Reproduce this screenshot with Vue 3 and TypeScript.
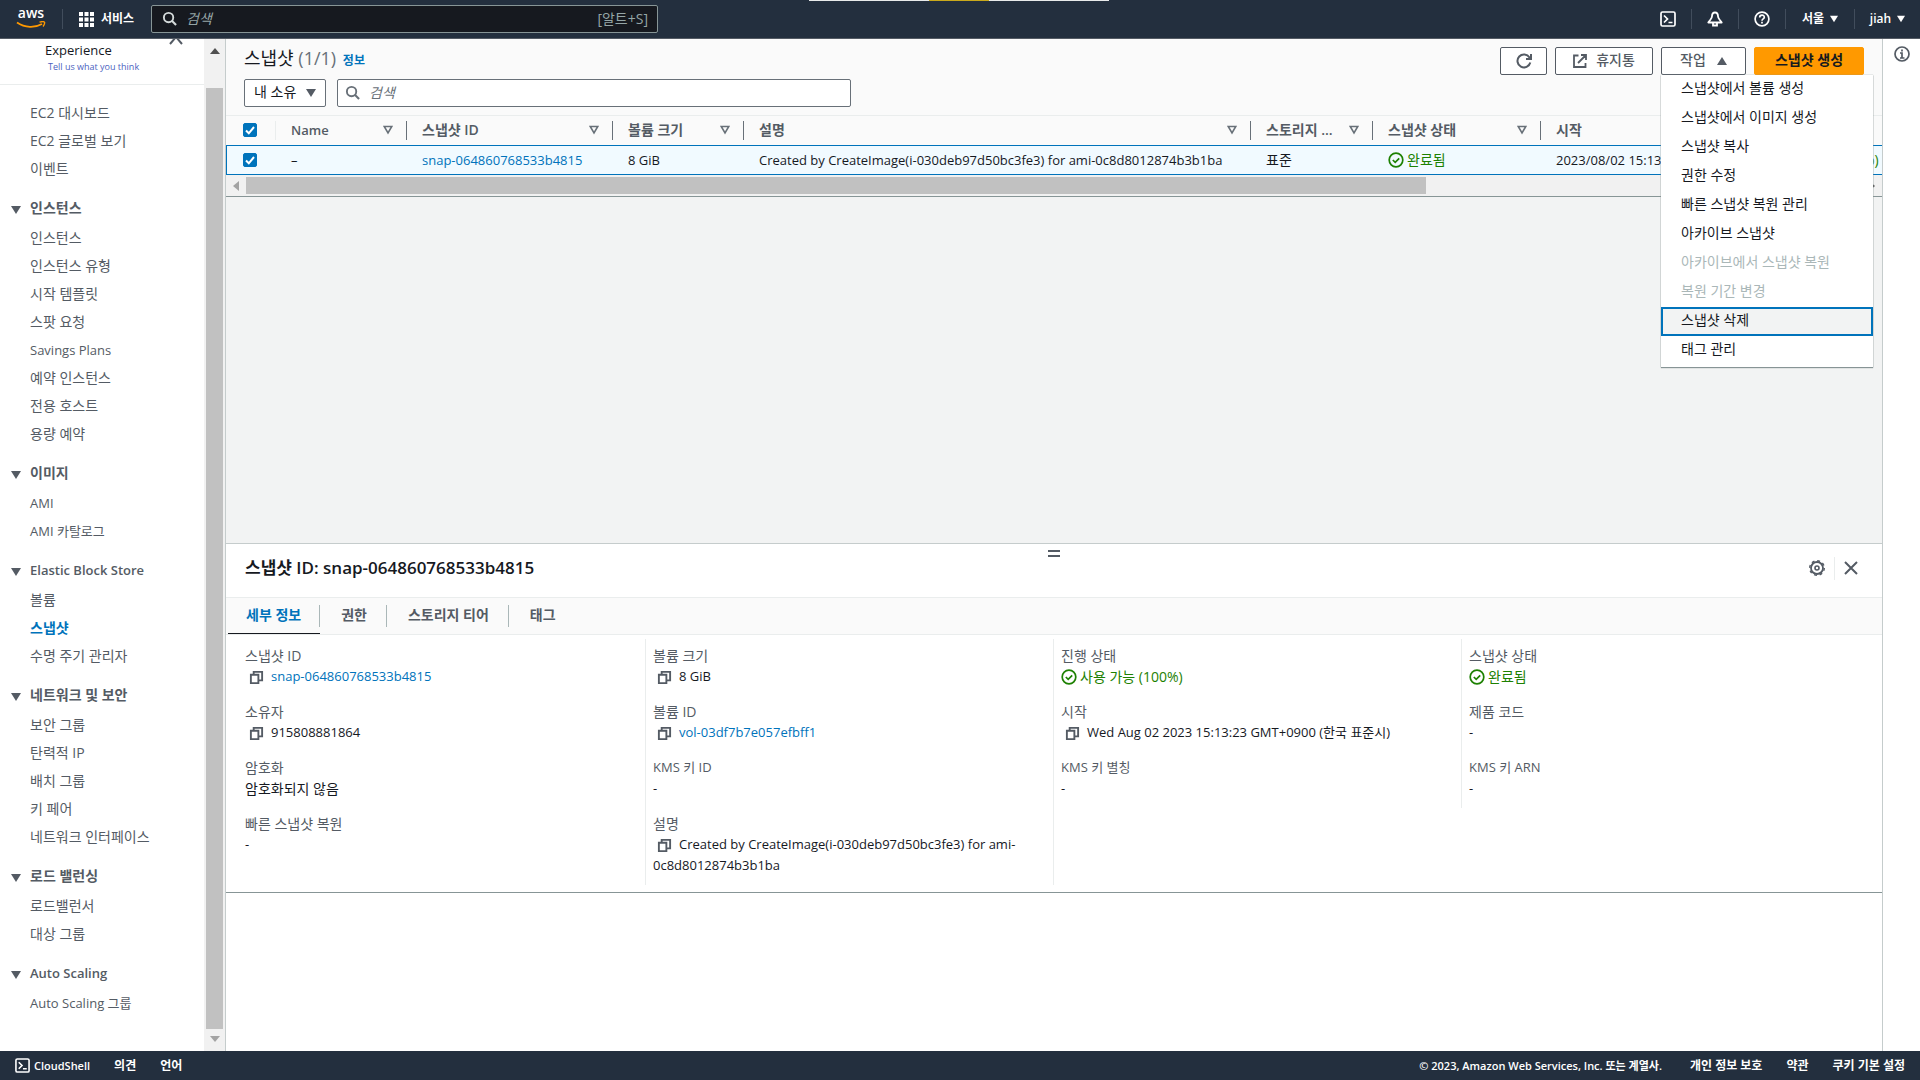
<script setup lang="ts">
import { ref } from 'vue'

interface NavGroup {
  title: string
  items: string[]
}

interface Field {
  label: string
  value: string
  kind?: 'copy' | 'link' | 'status'
}

const topLinks: string[] = ['EC2 대시보드', 'EC2 글로벌 보기', '이벤트']

const groups: NavGroup[] = [
  {
    title: '인스턴스',
    items: ['인스턴스', '인스턴스 유형', '시작 템플릿', '스팟 요청', 'Savings Plans', '예약 인스턴스', '전용 호스트', '용량 예약'],
  },
  { title: '이미지', items: ['AMI', 'AMI 카탈로그'] },
  { title: 'Elastic Block Store', items: ['볼륨', '스냅샷', '수명 주기 관리자'] },
  { title: '네트워크 및 보안', items: ['보안 그룹', '탄력적 IP', '배치 그룹', '키 페어', '네트워크 인터페이스'] },
  { title: '로드 밸런싱', items: ['로드밸런서', '대상 그룹'] },
  { title: 'Auto Scaling', items: ['Auto Scaling 그룹'] },
]

const columns = ['Name', '스냅샷 ID', '볼륨 크기', '설명', '스토리지 ...', '스냅샷 상태', '시작', '진행 상태']

const actions = [
  { label: '스냅샷에서 볼륨 생성' },
  { label: '스냅샷에서 이미지 생성' },
  { label: '스냅샷 복사' },
  { label: '권한 수정' },
  { label: '빠른 스냅샷 복원 관리' },
  { label: '아카이브 스냅샷' },
  { label: '아카이브에서 스냅샷 복원', disabled: true },
  { label: '복원 기간 변경', disabled: true },
  { label: '스냅샷 삭제', focused: true },
  { label: '태그 관리' },
]

const tabs = ['세부 정보', '권한', '스토리지 티어', '태그']

const details: Field[][] = [
  [
    { label: '스냅샷 ID', value: 'snap-064860768533b4815', kind: 'link' },
    { label: '소유자', value: '915808881864', kind: 'copy' },
    { label: '암호화', value: '암호화되지 않음' },
    { label: '빠른 스냅샷 복원', value: '-' },
  ],
  [
    { label: '볼륨 크기', value: '8 GiB', kind: 'copy' },
    { label: '볼륨 ID', value: 'vol-03df7b7e057efbff1', kind: 'link' },
    { label: 'KMS 키 ID', value: '-' },
    { label: '설명', value: 'Created by CreateImage(i-030deb97d50bc3fe3) for ami-0c8d8012874b3b1ba', kind: 'copy' },
  ],
  [
    { label: '진행 상태', value: '사용 가능 (100%)', kind: 'status' },
    { label: '시작', value: 'Wed Aug 02 2023 15:13:23 GMT+0900 (한국 표준시)', kind: 'copy' },
    { label: 'KMS 키 별칭', value: '-' },
  ],
  [
    { label: '스냅샷 상태', value: '완료됨', kind: 'status' },
    { label: '제품 코드', value: '-' },
    { label: 'KMS 키 ARN', value: '-' },
  ],
]

const allChecked = ref(true)
const rowChecked = ref(true)
const activeTab = ref('세부 정보')

// Hangul glyphs sit smaller in their box than Latin ones, so they get a larger size.
const script = (text: string): string => (/^[가-힣]/.test(text) ? 'ko' : 'la')
</script>

<template>
  <div class="app">
    <svg class="defs" aria-hidden="true">
      <symbol id="i-search" viewBox="0 0 16 16">
        <circle cx="7" cy="7" r="5" fill="none" stroke="currentColor" stroke-width="2" />
        <path d="M10.500 10.500l4.500 4.500" fill="none" stroke="currentColor" stroke-width="2.200" />
      </symbol>
      <symbol id="i-copy" viewBox="0 0 16 16">
        <path d="M2 5h8v9H2zM5 5V2h9v9h-4" fill="none" stroke="currentColor" stroke-width="2" />
      </symbol>
      <symbol id="i-check" viewBox="0 0 16 16">
        <circle cx="8" cy="8" r="6.8" fill="none" stroke="currentColor" stroke-width="1.7" />
        <path d="M4.8 8l2.4 2.4 4-4" fill="none" stroke="currentColor" stroke-width="1.7" />
      </symbol>
      <symbol id="i-filter" viewBox="0 0 10 10">
        <path d="M1.2 1.5h7.6L5 8z" fill="none" stroke="currentColor" stroke-width="1.6" />
      </symbol>
      <symbol id="i-down" viewBox="0 0 10 10">
        <path d="M0 1h10L5 9z" fill="currentColor" />
      </symbol>
      <symbol id="i-shell" viewBox="0 0 16 16">
        <rect x="1" y="1" width="14" height="14" rx="1.5" fill="none" stroke="currentColor" stroke-width="1.7" />
        <path d="M4 4.5L7.5 8 4 11.5M8.5 11.5h4" fill="none" stroke="currentColor" stroke-width="1.7" />
      </symbol>
    </svg>

    <header class="top">
      <span class="strip"><i></i></span>
      <a href="#" class="logo" aria-label="AWS">
        <span>aws</span>
        <svg width="30" height="8" viewBox="0 0 30 8" fill="none" stroke="#f90">
          <path d="M1 1.500c8 5.500 18 5.500 25 1.500" stroke-width="1.800" />
          <path d="M23.500 1.200c2-.6 4-.8 4.800-.2s0 3-1.300 4.500" stroke-width="1.400" />
        </svg>
      </a>
      <button type="button" class="services">
        <svg width="15" height="15" viewBox="0 0 15 15" fill="#fff">
          <path d="M0 0h4v4H0zM5.500 0h4v4h-4zM11 0h4v4h-4zM0 5.500h4v4H0zM5.500 5.500h4v4h-4zM11 5.500h4v4h-4zM0 11h4v4H0zM5.500 11h4v4h-4zM11 11h4v4h-4z" />
        </svg>
        서비스
      </button>
      <label class="gsearch">
        <svg width="15" height="15"><use href="#i-search" /></svg>
        <input type="text" placeholder="검색" aria-label="전체 검색" />
        <span>[알트+S]</span>
      </label>
      <nav class="tools">
        <button type="button" aria-label="CloudShell"><svg width="16" height="16"><use href="#i-shell" /></svg></button>
        <button type="button" aria-label="알림">
          <svg width="16" height="16" viewBox="0 0 16 16" fill="none" stroke="currentColor" stroke-width="1.8">
            <path d="M8 1.500c-2.300 0-3 1.800-3 3.800 0 2.700-2.200 3.700-3.700 6.200h13.400c-1.500-2.500-3.700-3.500-3.700-6.200 0-2-.7-3.800-3-3.800z" stroke-linejoin="round" />
            <path d="M6 12v2.500h4V12" />
          </svg>
        </button>
        <button type="button" aria-label="도움말">
          <svg width="16" height="16" viewBox="0 0 16 16" fill="none" stroke="currentColor" stroke-width="1.700">
            <circle cx="8" cy="8" r="6.900" />
            <path d="M5.700 6.500c0-3 4.600-3 4.600-.3C10.300 8 8 7.800 8 9.700M8 10.800v1.700" />
          </svg>
        </button>
        <button type="button" class="txt">서울 <svg width="8" height="8"><use href="#i-down" /></svg></button>
        <button type="button" class="txt user">jiah <svg width="8" height="8"><use href="#i-down" /></svg></button>
      </nav>
    </header>

    <div class="body">
      <div class="side">
        <nav class="nav">
          <div class="promo">
            <span>Experience</span>
            <a href="#">Tell us what you think</a>
            <svg width="14" height="12" viewBox="0 0 14 12"><path d="M1 11l6-7 6 7" fill="none" stroke="#545b64" stroke-width="2" /></svg>
          </div>
          <ul class="first">
            <li v-for="t in topLinks" :key="t"><a href="#" class="ko">{{ t }}</a></li>
          </ul>
          <section v-for="g in groups" :key="g.title">
            <h3 :class="script(g.title)">
              <svg width="10" height="10"><use href="#i-down" /></svg>{{ g.title }}
            </h3>
            <ul>
              <li v-for="t in g.items" :key="t">
                <a href="#" :class="[script(t), { on: t === '스냅샷' }]">{{ t }}</a>
              </li>
            </ul>
          </section>
        </nav>
        <div class="vbar">
          <svg width="10" height="6" viewBox="0 0 10 6"><path d="M0 6l5-6 5 6z" fill="#505050" /></svg>
          <i></i>
          <svg width="10" height="6" viewBox="0 0 10 6"><path d="M0 0l5 6 5-6z" fill="#a3a3a3" /></svg>
        </div>
      </div>

      <main>
        <section class="list">
          <div class="head">
            <h1>스냅샷 <span>(1/1)</span> <a href="#">정보</a></h1>
            <div class="btns">
              <button type="button" class="btn refresh" aria-label="새로 고침">
                <svg width="16" height="16" viewBox="0 0 16 16" fill="none" stroke="currentColor" stroke-width="2">
                  <path d="M14.300 9.500A6.500 6.500 0 1 1 13.500 4.500L15 6" />
                  <path d="M15 1v5h-5" />
                </svg>
              </button>
              <button type="button" class="btn bin">
                <svg width="14" height="14" viewBox="0 0 14 14" fill="none" stroke="currentColor" stroke-width="1.800">
                  <path d="M5.500 1.500H1v11.500h11.500V9M8 1h5v5M13 1L5 9" />
                </svg>
                <span>휴지통</span>
              </button>
              <div class="drop">
                <button type="button" class="btn act" aria-expanded="true">
                  <span>작업</span>
                  <svg width="10" height="10" viewBox="0 0 10 10"><path d="M0 9L5 1l5 8z" fill="currentColor" /></svg>
                </button>
                <ul class="menu">
                  <li v-for="a in actions" :key="a.label">
                    <button type="button" :disabled="a.disabled" :class="{ focused: a.focused }">{{ a.label }}</button>
                  </li>
                </ul>
              </div>
              <button type="button" class="btn primary"><span>스냅샷 생성</span></button>
            </div>
          </div>
          <div class="filters">
            <div class="owner">
              <select aria-label="소유권">
                <option>내 소유</option>
              </select>
              <svg width="10" height="10"><use href="#i-down" /></svg>
            </div>
            <label class="search">
              <svg width="15" height="15"><use href="#i-search" /></svg>
              <input type="text" placeholder="검색" aria-label="스냅샷 검색" />
            </label>
          </div>

          <div class="scroll">
            <table>
              <colgroup>
                <col class="c0" /><col class="c1" /><col class="c2" /><col class="c3" /><col class="c4" /><col class="c5" /><col class="c6" /><col class="c7" /><col class="c8" />
              </colgroup>
              <thead>
                <tr>
                  <th class="pick"><div><input v-model="allChecked" type="checkbox" aria-label="모두 선택" /></div></th>
                  <th v-for="c in columns" :key="c">
                    <div :class="script(c)">
                      <span>{{ c }}</span>
                      <svg width="10" height="10"><use href="#i-filter" /></svg>
                    </div>
                  </th>
                </tr>
              </thead>
              <tbody>
                <tr>
                  <td class="pick"><input v-model="rowChecked" type="checkbox" aria-label="스냅샷 선택" /></td>
                  <td>–</td>
                  <td><a href="#">snap-064860768533b4815</a></td>
                  <td>8 GiB</td>
                  <td>Created by CreateImage(i-030deb97d50bc3fe3) for ami-0c8d8012874b3b1ba</td>
                  <td class="ko">표준</td>
                  <td class="ko"><span class="ok"><svg width="16" height="16"><use href="#i-check" /></svg>완료됨</span></td>
                  <td>2023/08/02 15:13 GMT+9</td>
                  <td class="ko"><span class="ok"><svg width="16" height="16"><use href="#i-check" /></svg>사용 가능 (100%)</span></td>
                </tr>
              </tbody>
            </table>
          </div>
          <div class="hbar">
            <svg width="6" height="10" viewBox="0 0 6 10"><path d="M6 0L0 5l6 5z" fill="#a3a3a3" /></svg>
            <div><i></i></div>
            <svg width="6" height="10" viewBox="0 0 6 10"><path d="M0 0l6 5-6 5z" fill="#505050" /></svg>
          </div>
        </section>

        <section class="panel">
          <div class="grip"><svg width="12" height="8" viewBox="0 0 12 8"><path d="M0 1h12M0 6h12" stroke="#545b64" stroke-width="2" /></svg></div>
          <div class="phead">
            <h2>스냅샷 ID: snap-064860768533b4815</h2>
            <button type="button" aria-label="기본 설정">
              <svg width="16" height="16" viewBox="0 0 16 16" fill="none" stroke="currentColor">
                <circle cx="8" cy="8" r="6" stroke-width="1.800" />
                <circle cx="8" cy="8" r="7.300" stroke-width="1.400" stroke-dasharray="2.900 2.830" />
                <circle cx="8" cy="8" r="2" stroke-width="1.600" />
              </svg>
            </button>
            <button type="button" class="close" aria-label="닫기">
              <svg width="14" height="14" viewBox="0 0 14 14"><path d="M1 1l12 12M13 1L1 13" stroke="currentColor" stroke-width="2" /></svg>
            </button>
          </div>
          <div class="tabs" role="tablist">
            <button v-for="t in tabs" :key="t" type="button" role="tab" :class="{ on: t === activeTab }" @click="activeTab = t">
              <span>{{ t }}</span>
            </button>
          </div>
          <div class="grid">
            <dl v-for="(col, i) in details" :key="i">
              <template v-for="f in col" :key="f.label">
                <dt :class="script(f.label)">{{ f.label }}</dt>
                <dd :class="[script(f.value), f.kind]">
                  <svg v-if="f.kind === 'status'" width="16" height="16"><use href="#i-check" /></svg>
                  <button v-else-if="f.kind" type="button" :aria-label="f.label + ' 복사'"><svg width="15" height="15"><use href="#i-copy" /></svg></button>
                  <a v-if="f.kind === 'link'" href="#">{{ f.value }}</a>
                  <template v-else>{{ f.value }}</template>
                </dd>
              </template>
            </dl>
          </div>
        </section>
      </main>

      <aside class="rail">
        <button type="button" aria-label="정보">
          <svg width="16" height="16" viewBox="0 0 16 16" fill="none" stroke="currentColor" stroke-width="1.700">
            <circle cx="8" cy="8" r="7" />
            <path d="M6 7h2v5M6 12h4.500M8 3.500v2" />
          </svg>
        </button>
      </aside>
    </div>

    <footer>
      <a href="#" class="cs"><svg width="15" height="15"><use href="#i-shell" /></svg>CloudShell</a>
      <a href="#">의견</a>
      <a href="#">언어</a>
      <span class="copyr">© 2023, Amazon Web Services, Inc. 또는 계열사.</span>
      <a href="#">개인 정보 보호</a>
      <a href="#">약관</a>
      <a href="#">쿠키 기본 설정</a>
    </footer>
  </div>
</template>

<style>
body {
  margin: 0;
  background: #fff;
}
</style>

<style scoped>
.app {
  display: flex;
  flex-direction: column;
  height: 100vh;
  overflow: hidden;
  font: 13px/20px "Open Sans", "Noto Sans", "Noto Sans CJK KR", sans-serif;
  color: #16191f;
}
.app * {
  box-sizing: border-box;
}
.defs {
  position: absolute;
  width: 0;
  height: 0;
}
svg {
  flex: none;
}
a {
  color: #0073bb;
  text-decoration: none;
}
button,
input,
select {
  font: inherit;
  color: inherit;
  margin: 0;
}
button {
  background: none;
  border: 0;
  padding: 0;
}
ul {
  list-style: none;
  margin: 0;
  padding: 0;
}
input::placeholder {
  font-style: italic;
  color: #687078;
  opacity: 1;
}
.ko {
  font-size: 14px;
}
.la {
  font-size: 13px;
}

/* top bar */
.top {
  position: relative;
  display: flex;
  align-items: center;
  flex: none;
  height: 39px;
  padding-left: 16px;
  background: #232f3e;
  border-bottom: 1px solid #545b64;
  color: #fff;
  font-size: 12px;
  font-weight: 600;
}
.strip {
  position: absolute;
  top: 0;
  left: 50%;
  width: 300px;
  height: 1px;
  margin-left: -151px;
  background: #e8eaea;
}
.strip i {
  display: block;
  width: 60px;
  height: 1px;
  margin: 0 auto;
  background: #c9a91c;
}
.logo {
  display: flex;
  flex-direction: column;
  align-items: center;
  justify-content: flex-end;
  height: 20px;
  padding-right: 16px;
  border-right: 1px solid #414d5c;
  color: #fff;
  font-size: 14px;
  line-height: 16px;
}
.services {
  display: flex;
  align-items: center;
  gap: 7px;
  width: 88px;
  padding-left: 16px;
}
.gsearch {
  display: flex;
  align-items: center;
  width: 507px;
  height: 28px;
  padding: 0 9px 1px 10px;
  background: #16191f;
  border: 1px solid #879596;
  border-radius: 2px;
  font-size: 14px;
  font-weight: 400;
  color: #95a5a6;
}
.gsearch svg {
  color: #d5dbdb;
}
.gsearch input,
.search input {
  flex: 1;
  min-width: 0;
  padding: 0 9px;
  border: 0;
  outline: 0;
  background: none;
}
.gsearch input::placeholder {
  color: #95a5a6;
}
.tools {
  display: flex;
  margin-left: auto;
}
.tools button {
  display: flex;
  align-items: center;
  justify-content: center;
  width: 47px;
  height: 20px;
  border-right: 1px solid #414d5c;
}
.tools .txt {
  gap: 6px;
  width: 69px;
}
.tools .user {
  width: 65px;
  border: 0;
}

/* side navigation */
.body {
  display: flex;
  flex: 1;
  min-height: 0;
}
.side {
  display: flex;
  flex: none;
  width: 226px;
  border-right: 1px solid #c5cccc;
}
.nav {
  flex: 1;
  overflow: hidden;
}
.promo {
  position: relative;
  height: 46px;
  padding: 1px 0 0 45px;
  border-bottom: 1px solid #eaeded;
}
.promo span {
  display: block;
}
.promo a {
  display: block;
  margin-left: 3px;
  font-size: 9px;
  line-height: 14px;
  color: #4b5fc0;
}
.promo svg {
  position: absolute;
  top: -6px;
  right: 21px;
}
.first {
  padding-top: 14px;
}
.nav li {
  height: 28px;
  padding-left: 30px;
  line-height: 28px;
}
.nav li a {
  color: #545b64;
}
.nav li a.on {
  color: #0073bb;
  font-weight: 700;
}
h3 {
  display: flex;
  align-items: center;
  gap: 9px;
  height: 30px;
  margin: 11px 0 0;
  padding: 0 0 2px 11px;
  font-weight: 600;
  color: #545b64;
}
h3 svg {
  margin-top: 3px;
}
.vbar {
  display: flex;
  flex-direction: column;
  align-items: center;
  width: 21px;
  padding: 9px 0;
  background: #f1f1f1;
}
.vbar i {
  flex: 1;
  width: 17px;
  margin: 34px 0 7px;
  background: #c1c1c1;
}

/* snapshot list */
main {
  display: flex;
  flex-direction: column;
  flex: 1;
  min-width: 0;
}
.list {
  flex: 1;
  background: #f2f3f3;
}
.head {
  display: flex;
  justify-content: space-between;
  height: 36px;
  padding: 8px 18px 0;
  background: #fafafa;
}
h1 {
  margin: 0;
  font-size: 18px;
  line-height: 22px;
  font-weight: 400;
}
h1 span {
  color: #687078;
}
h1 a {
  margin-left: 2px;
  font-size: 12px;
  font-weight: 600;
}
.btns {
  display: flex;
  gap: 8px;
}
.btn {
  display: flex;
  align-items: center;
  justify-content: center;
  gap: 9px;
  height: 28px;
  border: 1px solid #545b64;
  border-radius: 2px;
  background: #fff;
  color: #545b64;
  font-size: 14px;
  font-weight: 500;
}
.btn span {
  padding-bottom: 3px;
}
.refresh {
  width: 47px;
}
.bin {
  width: 98px;
}
.act {
  width: 85px;
  gap: 11px;
}
.primary {
  width: 110px;
  border-color: #f90;
  background: #f90;
  color: #16191f;
  font-weight: 600;
}
.drop {
  position: relative;
}
.menu {
  position: absolute;
  z-index: 5;
  top: 28px;
  left: 0;
  width: 212px;
  padding-bottom: 2px;
  background: #fff;
  box-shadow: 0 0 1px #879596, 0 1px 1px #879596;
  font-size: 14px;
}
.menu button {
  display: block;
  width: 100%;
  height: 29px;
  padding-left: 18px;
  border: 2px solid transparent;
  text-align: left;
  line-height: 20px;
  padding-bottom: 4px;
}
.menu button:disabled {
  color: #aab7b8;
}
.menu .focused {
  background: #f2f3f3;
  border-color: #0073bb;
}
.filters {
  display: flex;
  gap: 11px;
  height: 41px;
  padding: 4px 18px 0;
  background: #fafafa;
  border-bottom: 1px solid #eaeded;
}
.owner {
  position: relative;
  width: 82px;
  height: 28px;
}
.owner select {
  appearance: none;
  width: 100%;
  height: 28px;
  padding: 0 9px 3px;
  border: 1px solid #687078;
  border-radius: 2px;
  background: #fff;
  font-size: 14px;
}
.owner svg {
  position: absolute;
  top: 9px;
  right: 10px;
  color: #545b64;
}
.search {
  display: flex;
  align-items: center;
  width: 514px;
  height: 28px;
  padding: 0 0 1px 7px;
  border: 1px solid #687078;
  border-radius: 2px;
  background: #fff;
  font-size: 14px;
}
.search svg {
  color: #687078;
}
.scroll {
  overflow: hidden;
}
table {
  width: 1760px;
  table-layout: fixed;
  border-collapse: separate;
  border-spacing: 0;
}
.c0 { width: 50px; }
.c1 { width: 131px; }
.c2 { width: 206px; }
.c3 { width: 131px; }
.c4 { width: 507px; }
.c5 { width: 122px; }
.c6 { width: 168px; }
.c7 { width: 201px; }
th,
td {
  padding: 0;
  text-align: left;
  white-space: nowrap;
}
th {
  height: 29px;
  background: #fafafa;
  font-weight: 600;
  color: #545b64;
}
th div {
  display: flex;
  align-items: center;
  justify-content: space-between;
  height: 19px;
  padding: 0 13px 2px 15px;
  border-right: 1px solid #687078;
}
th.pick div {
  padding-left: 0;
  border-color: #eaeded;
}
th svg {
  color: #687078;
}
td {
  height: 30px;
  padding-left: 15px;
  background: #f1faff;
  border: 1px solid #0073bb;
  border-width: 1px 0;
}
td.pick {
  border-left-width: 1px;
}
.pick {
  padding-left: 17px;
}
.pick input {
  appearance: none;
  display: block;
  width: 14px;
  height: 14px;
  border: 1px solid #687078;
  border-radius: 2px;
  background: #fff;
}
.pick input:checked {
  border-color: #0073bb;
  background: #0073bb url("data:image/svg+xml,%3Csvg xmlns='http://www.w3.org/2000/svg' viewBox='0 0 12 12'%3E%3Cpath d='M2 6.500l2.800 2.800L10 3' fill='none' stroke='%23fff' stroke-width='2'/%3E%3C/svg%3E");
}
td.pick {
  padding-left: 16px;
}
.ok,
dd.status {
  display: flex;
  align-items: center;
  gap: 3px;
  color: #1d8102;
}
.hbar {
  display: flex;
  align-items: center;
  height: 22px;
  padding: 0 7px;
  background: #f1f1f1;
  border-bottom: 1px solid #879596;
}
.hbar div {
  flex: 1;
  margin: 0 7px;
}
.hbar i {
  display: block;
  width: 73%;
  height: 17px;
  background: #c1c1c1;
}

/* split panel */
.panel {
  flex: none;
  height: 508px;
  border-top: 1px solid #c5cccc;
}
.grip {
  display: flex;
  justify-content: center;
  height: 13px;
  padding-top: 6px;
}
.phead {
  display: flex;
  align-items: center;
  height: 41px;
  padding: 0 24px 18px 19px;
  border-bottom: 1px solid #eaeded;
  color: #545b64;
}
h2 {
  flex: 1;
  margin: 0;
  font-size: 17px;
  line-height: 22px;
  font-weight: 600;
  color: #16191f;
}
.phead button {
  display: flex;
  align-items: center;
  height: 23px;
  padding-right: 9px;
}
.phead .close {
  padding: 0 0 0 9px;
  border-left: 1px solid #eaeded;
}
.tabs {
  display: flex;
  height: 37px;
  padding-left: 2px;
  background: #fafafa;
  border-bottom: 1px solid #eaeded;
}
.tabs button {
  border-bottom: 1px solid transparent;
  font-size: 14px;
  font-weight: 600;
  color: #545b64;
}
.tabs span {
  display: block;
  padding: 0 19px 2px 21px;
  border-right: 1px solid #aab7b8;
}
.tabs button:first-child span {
  padding-left: 18px;
  padding-right: 18px;
}
.tabs button:last-child span {
  border: 0;
}
.tabs .on {
  border-color: #16191f;
  color: #0073bb;
}
.grid {
  display: grid;
  grid-template-columns: repeat(4, 1fr);
  align-items: start;
  padding: 4px 13px 7px 11px;
  border-bottom: 1px solid #879596;
}
dl {
  margin: 0;
  padding: 6px 20px 9px 7px;
  border-left: 1px solid #eaeded;
}
dl:first-child {
  border-color: transparent;
}
dl:nth-child(2),
dl:nth-child(3) {
  align-self: stretch;
}
dt,
dd {
  margin: 0;
  line-height: 21px;
}
dt {
  color: #545b64;
}
dd {
  margin-bottom: 14px;
}
dd:last-child {
  margin-bottom: 0;
}
dd button {
  padding: 0 7px 0 4px;
  vertical-align: middle;
  color: #545b64;
}
dd button svg {
  display: block;
}

/* right rail */
.rail {
  display: flex;
  justify-content: center;
  align-items: flex-start;
  flex: none;
  width: 38px;
  padding-top: 7px;
  border-left: 1px solid #c5cccc;
  color: #545b64;
}
.rail svg {
  display: block;
}

footer {
  display: flex;
  align-items: center;
  gap: 24px;
  flex: none;
  height: 29px;
  padding: 0 15px;
  background: #232f3e;
  font-size: 12px;
  font-weight: 600;
  color: #fff;
}
footer a {
  color: #fff;
}
footer .cs {
  display: flex;
  align-items: center;
  gap: 4px;
  font-size: 11px;
}
.copyr {
  margin-left: auto;
  margin-right: 4px;
  font-size: 11px;
}
</style>
